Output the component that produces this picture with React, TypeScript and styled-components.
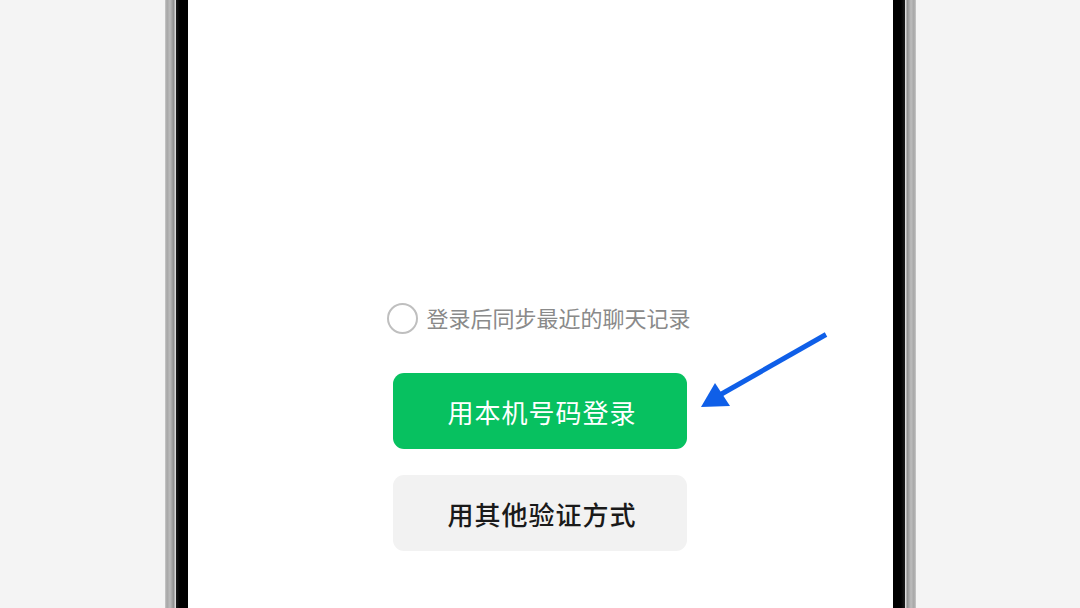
import React from "react";
import styled, { createGlobalStyle } from "styled-components";

const Global = createGlobalStyle`
  html, body { margin: 0; padding: 0; }
  body {
    background: #f4f4f4;
    font-family: "Noto Sans CJK SC", "Noto Sans", sans-serif;
    overflow: hidden;
  }
`;

const Page = styled.div`
  position: relative;
  width: 1080px;
  height: 608px;
  display: flex;
  justify-content: center;
  overflow: hidden;
`;

const Frame = styled.div`
  width: 751px;
  height: 608px;
  box-sizing: border-box;
  padding: 0 11px;
  display: flex;
  background: linear-gradient(
    to right,
    #c9c9c9 0px,
    #a6a6a6 2px,
    #bcbcbc 5px,
    #8c8c8c 9px,
    #d9d9d9 10px,
    #d9d9d9 11px,
    #050505 11px,
    #050505 740px,
    #d9d9d9 740px,
    #d9d9d9 741px,
    #8c8c8c 742px,
    #bcbcbc 746px,
    #a6a6a6 749px,
    #c9c9c9 751px
  );
`;

const Bezel = styled.div`
  flex: 1;
  display: flex;
  padding: 0 12px 0 12px;
  background: linear-gradient(to right, #1a1a1a 0px, #000 4px, #000 calc(100% - 4px), #1a1a1a 100%);
`;

const Screen = styled.div`
  flex: 1;
  background: #ffffff;
  display: flex;
  flex-direction: column;
  align-items: center;
  justify-content: flex-end;
  padding-bottom: 57px;
`;

const AgreeRow = styled.div`
  display: flex;
  align-items: center;
  gap: 8px;
  margin-bottom: 39px;
  margin-right: 2px;
`;

const Circle = styled.div`
  width: 31px;
  height: 31px;
  box-sizing: border-box;
  border-radius: 50%;
  border: 2px solid #bfbfbf;
`;

const AgreeText = styled.span`
  font-size: 22px;
  line-height: 31px;
  color: #8a8a8a;
  position: relative;
  top: -1px;
`;

const Button = styled.button<{ $primary?: boolean }>`
  width: 294px;
  height: 76px;
  border: none;
  border-radius: 11px;
  margin: 0;
  padding: 0 0 0 4px;
  display: flex;
  align-items: center;
  justify-content: center;
  font-family: "Noto Sans CJK SC", "Noto Sans", sans-serif;
  font-size: 26px;
  letter-spacing: 1px;
  background: ${(p) => (p.$primary ? "#07c160" : "#f2f2f2")};
  color: ${(p) => (p.$primary ? "#ffffff" : "#1a1a1a")};
  font-weight: ${(p) => (p.$primary ? 400 : 500)};
  & + & {
    margin-top: 26px;
  }
`;

const ArrowLayer = styled.svg`
  position: absolute;
  left: 0;
  top: 0;
  pointer-events: none;
`;

export default function App() {
  return (
    <>
      <Global />
      <Page>
        <Frame>
          <Bezel>
            <Screen>
              <AgreeRow>
                <Circle />
                <AgreeText>登录后同步最近的聊天记录</AgreeText>
              </AgreeRow>
              <Button $primary>用本机号码登录</Button>
              <Button>用其他验证方式</Button>
            </Screen>
          </Bezel>
        </Frame>
        <ArrowLayer width="1080" height="608" viewBox="0 0 1080 608">
          <line x1="826" y1="334.5" x2="718" y2="396" stroke="#0f5fe8" strokeWidth="5" />
          <polygon points="701,407 715,383 730,406" fill="#0f5fe8" />
        </ArrowLayer>
      </Page>
    </>
  );
}
